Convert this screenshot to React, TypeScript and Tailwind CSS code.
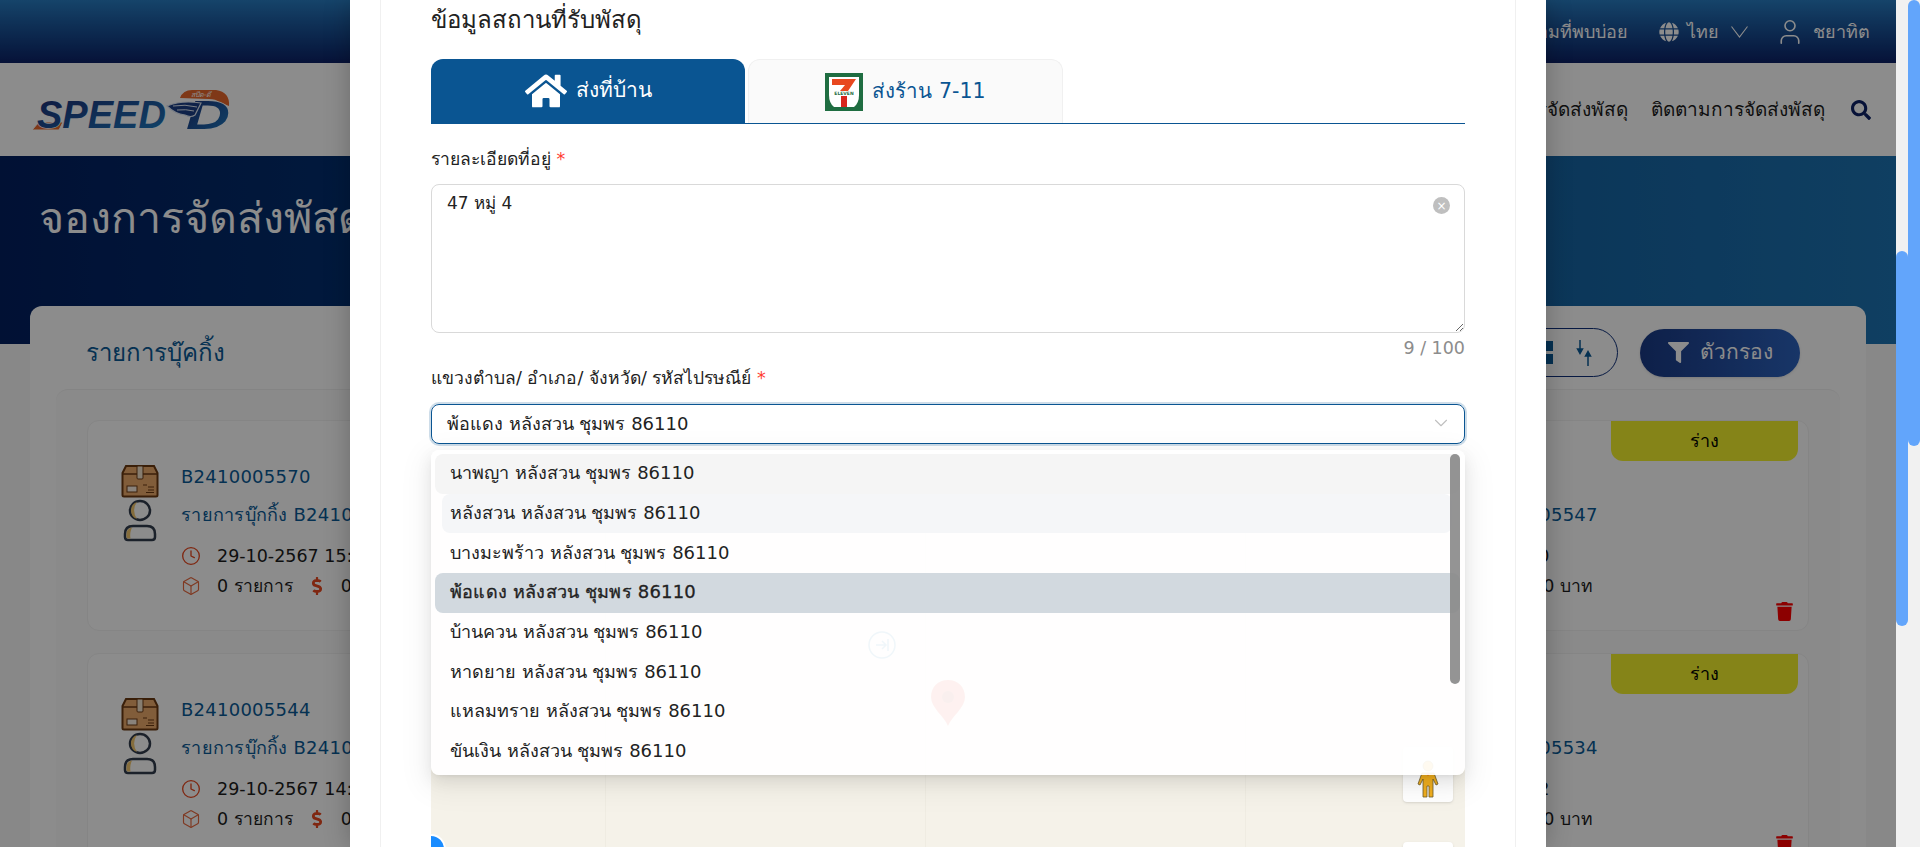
import { Box, ChevronDown, Clock, User } from "lucide-react"
import { FaDollarSign, FaFilter, FaGlobe, FaHome, FaSearch, FaTrash } from "react-icons/fa"

const font = "font-['DejaVu_Sans','Noto_Sans',sans-serif]"

const SpeedLogo = () => (
    <svg width="202" height="50" viewBox="0 -4 202 50">
        <defs>
            <linearGradient id="speedFill" x1="0" y1="0" x2="1" y2="1">
                <stop offset="0" stopColor="#1c2a72" />
                <stop offset="1" stopColor="#1f7fc4" />
            </linearGradient>
        </defs>
        <path d="M150 9 q3 -8 12 -8 h24 q14 2 13 16 l-10 -4 q-3 -3 -10 -3 z" fill="#e8662a" />
        <text x="171" y="8" fontSize="7" fill="#fff" fontStyle="italic" textAnchor="middle">สปีด-ดี</text>
        <path d="M2 41 l7 -8 h24 l-4 8 z" fill="#e8662a" stroke="#fff" strokeWidth="1" />
        <text x="7" y="39" fontSize="38" fontWeight="700" fontStyle="italic" fontFamily="'Liberation Sans', sans-serif" fill="url(#speedFill)" stroke="#fff" strokeWidth="1.5" paintOrder="stroke">SPEED</text>
        <text x="156" y="40" fontSize="40" fontWeight="700" fontStyle="italic" fontFamily="'Liberation Sans', sans-serif" textLength="44" lengthAdjust="spacingAndGlyphs" fill="url(#speedFill)" stroke="#fff" strokeWidth="1.5" paintOrder="stroke">D</text>
        <path d="M137 17 q14 -6 34 -3 l-6 12 q-4 3 -10 0 q-10 -1 -18 -9 z" fill="#1c3f85" stroke="#dfe7f3" strokeWidth="1.2" />
        <path d="M143 17 q12 -2 24 1 M147 21 q9 -1 17 1" fill="none" stroke="#dfe7f3" strokeWidth="1" />
    </svg>
)

const ParcelIcon = () => (
    <svg width="38" height="78" viewBox="0 0 38 78" className="shrink-0">
        <path d="M1.500 9 L5 2 h28 l3.500 7 v22 q0 1.500 -1.500 1.500 h-32 q-1.500 0 -1.500 -1.500 z" fill="#eca96b" stroke="#6b3a12" strokeWidth="2" />
        <path d="M1.500 10 h35" stroke="#6b3a12" strokeWidth="1.500" />
        <rect x="16" y="2" width="6" height="13" rx="1" fill="#f4e3cd" stroke="#6b3a12" strokeWidth="1" />
        <rect x="6" y="22" width="10" height="6" fill="#f9ede0" stroke="#6b3a12" strokeWidth="1" />
        <path d="M22 21 h4 M27 23 h6 M27 26 h6 M25 28.500 h8" stroke="#6b3a12" strokeWidth="1" />
        <ellipse cx="19" cy="46.500" rx="10" ry="9.500" fill="#fff" stroke="#323c4d" strokeWidth="2.500" />
        <path d="M16 38 a9 9 0 0 0 0 17 a14 14 0 0 1 0 -17" fill="#f2c66d" />
        <path d="M7 76 q-3 0 -3 -3 v-3 q0 -8 8 -8 h14 q8 0 8 8 v3 q0 3 -3 3 z" fill="#fff" stroke="#323c4d" strokeWidth="2.500" />
        <path d="M11 63.500 q-5.500 1 -5.500 6.500 v3 q0 1.500 2 1.500 h2 q-1 -6 1.500 -11" fill="#f2c66d" />
    </svg>
)

const SevenEleven = () => (
    <svg width="38" height="38" viewBox="0 0 38 38">
        <rect width="38" height="38" fill="#1f6d41" />
        <path d="M4 4 h30 v18 q0 8 -5 12 h-20 q-5 -4 -5 -12 z" fill="#fff" />
        <path d="M7 6 h24 l-8 12 h-8 l5 -6 h-13 z" fill="#e8481f" />
        <path d="M16 23 h6 v11 h-6 z" fill="#d8261c" />
        <rect x="8" y="18" width="22" height="5" fill="#fff" />
        <text x="19" y="22" fontSize="4.500" textAnchor="middle" fill="#1f6d41" fontWeight="700">ELEVEN</text>
    </svg>
)

const Pegman = () => (
    <svg width="22" height="38" viewBox="0 0 22 38">
        <circle cx="11" cy="6" r="5" fill="#f5b82e" stroke="#8a6a1a" strokeWidth="0.600" />
        <path d="M5 13 h12 l4 11 -2 1 -3 -6 v18 h-4 v-11 h-2 v11 h-4 v-18 l-3 6 -2 -1 z" fill="#f0ae1e" stroke="#6d5a2a" strokeWidth="0.800" />
        <path d="M9 13 h4 l-2 3 z" fill="#d9541e" />
    </svg>
)

type Booking = { id: string; time: string }

const BookingCard = ({ id, time }: Booking) => (
    <div className="relative flex h-[211px] gap-[22px] rounded-xl border border-[#f2f2f2] bg-white pl-[33px] pt-[43px]">
        <ParcelIcon />
        <div className="flex flex-col">
            <div className="-mt-[1px] h-[28px] text-[18px] leading-[28px] tracking-[0.25px] text-[#0a5a96]">{id}</div>
            <div className="mt-[10px] h-[28px] text-[18px] leading-[28px] tracking-[0.25px] text-[#0a5a96]">รายการบุ๊กกิ้ง {id}</div>
            <div className="mt-[13px] flex h-[28px] items-center gap-[16px] text-[17.5px] text-[#1c1c1c]">
                <Clock size={20} strokeWidth={1.6} className="text-[#e8481f]" />
                <span>{time}</span>
            </div>
            <div className="mt-[2px] flex h-[28px] items-center text-[17.5px] text-[#1c1c1c]">
                <Box size={20} strokeWidth={1.4} className="text-[#e8693f]" />
                <span className="ml-[16px]">0 รายการ</span>
                <FaDollarSign size={18} className="ml-[15px] text-[#e8481f]" />
                <span className="ml-[15px]">0.00 บาท</span>
            </div>
        </div>
        <div className="absolute right-[10px] top-0 flex h-[40px] w-[187px] items-center justify-center rounded-b-xl bg-[#f2f02c] pb-[2px] text-[18px] text-black">ร่าง</div>
        <FaTrash size={19} className="absolute bottom-[9px] right-[14px] text-[#ff0000]" />
    </div>
)

const options = [
    "นาพญา หลังสวน ชุมพร 86110",
    "หลังสวน หลังสวน ชุมพร 86110",
    "บางมะพร้าว หลังสวน ชุมพร 86110",
    "พ้อแดง หลังสวน ชุมพร 86110",
    "บ้านควน หลังสวน ชุมพร 86110",
    "หาดยาย หลังสวน ชุมพร 86110",
    "แหลมทราย หลังสวน ชุมพร 86110",
    "ขันเงิน หลังสวน ชุมพร 86110",
]

const optionClass = (i: number) => {
    if (i === 0) return "pl-[15px] bg-[#f5f5f5] rounded-lg mr-[5px]"
    if (i === 1) return "pl-[8px] bg-[#f5f6f8] rounded-lg ml-[7px] mr-[13px]"
    if (i === 3) return "pl-[15px] bg-[#d2d9df] rounded-lg mr-[5px] tracking-[0.2px] [-webkit-text-stroke:0.3px_#222]"
    return "pl-[15px]"
}

const Page = () => (
    <div className="h-[847px] w-[1896px] bg-[#f7f7f7]">
        <div className="flex h-[63px] items-center justify-end bg-gradient-to-b from-[#287cc1] to-[#0d2166] pr-[26px] text-[18px] text-white">
            <span>คำถามที่พบบ่อย</span>
            <FaGlobe size={20} className="ml-[31px]" />
            <span className="ml-[8px]">ไทย</span>
            <svg width="17" height="12" viewBox="0 0 17 12" fill="none" stroke="currentColor" strokeWidth="1.1" className="ml-[12px]">
                <path d="M0.500 0.500 L8.500 11 L16.500 0.500" />
            </svg>
            <User size={30} strokeWidth={1.3} className="ml-[27px]" />
            <span className="ml-[8px]">ชยาทิต</span>
        </div>
        <div className="flex h-[93px] items-center justify-between bg-white pl-[30px] pr-[25px]">
            <SpeedLogo />
            <div className="flex items-center text-[19px] text-[#1c1c1c]">
                <span>การจัดส่งพัสดุ</span>
                <span className="ml-[23px]">ติดตามการจัดส่งพัสดุ</span>
                <FaSearch size={20} className="ml-[26px] text-[#0d2166]" />
            </div>
        </div>
        <div className="h-[188px] bg-gradient-to-r from-[#021f60] to-[#1d73b2] pl-[39px] pt-[32px] text-[43px] leading-[60px] text-white">จองการจัดส่งพัสดุ</div>
        <div className="mx-[30px] -mt-[38px] rounded-t-xl bg-white">
            <div className="flex h-[83px] items-center justify-between pl-[56px] pr-[66px] pt-[10px]">
                <div className="text-[24px] text-[#0a5a96]">รายการบุ๊คกิ้ง</div>
                <div className="flex items-center gap-[22px]">
                    <div className="flex h-[49px] w-[150px] items-center justify-end gap-[22px] rounded-full border border-[#0d2f7a] pr-[24px] text-[#0a5a96]">
                        <div className="grid w-[22px] grid-cols-2 gap-[3px]">
                            <span className="h-[10px] bg-[#0a5a96]" />
                            <span className="h-[10px] bg-[#0a5a96]" />
                            <span className="h-[10px] bg-[#0a5a96]" />
                            <span className="h-[10px] bg-[#0a5a96]" />
                        </div>
                        <svg width="18" height="28" viewBox="0 0 18 28" fill="none" stroke="currentColor" strokeWidth="1.5">
                            <path d="M5 1 v13 M2.500 10 l2.500 4.500 2.500 -4.500 z" fill="currentColor" />
                            <path d="M13 27 v-13 M10.500 17 l2.500 -4.500 2.500 4.500 z" fill="currentColor" />
                        </svg>
                    </div>
                    <div className="flex h-[48px] w-[160px] items-center justify-center gap-[11px] rounded-full bg-gradient-to-r from-[#1a3a85] to-[#2c62bd] text-[21px] text-white shadow">
                        <FaFilter size={21} />
                        <span>ตัวกรอง</span>
                    </div>
                </div>
            </div>
            <div className="mx-[26px] rounded-t-xl border-t border-[#f0f0f0] bg-[#fbfbfb] px-[31px] pt-[30px]">
                <div className="grid grid-cols-3 gap-x-[40px] gap-y-[22px]">
                    <BookingCard id="B2410005570" time="29-10-2567 15:32" />
                    <BookingCard id="B2410005560" time="29-10-2567 15:20" />
                    <BookingCard id="B2410005547" time="29-10-2567 15:00" />
                    <BookingCard id="B2410005544" time="29-10-2567 14:58" />
                    <BookingCard id="B2410005540" time="29-10-2567 14:50" />
                    <BookingCard id="B2410005534" time="29-10-2567 14:42" />
                </div>
            </div>
        </div>
    </div>
)

const Modal = () => (
    <div className="absolute bottom-0 left-[350px] top-0 w-[1196px] bg-white px-[30px] shadow-[0_0_24px_rgba(0,0,0,0.25)]">
        <div className="h-full border-x border-[#f0f0f0] px-[50px] pt-[5px]">
            <div className="h-[30px] text-[24px] leading-[30px] text-[#222]">ข้อมูลสถานที่รับพัสดุ</div>
            <div className="mt-[24px] flex h-[65px] gap-[3px] border-b border-[#0a5592]">
                <div className="flex w-[314px] items-center justify-center gap-[9px] rounded-t-xl bg-[#0a5592] text-[21px] text-white">
                    <FaHome size={42} />
                    <span>ส่งที่บ้าน</span>
                </div>
                <div className="flex w-[315px] items-center justify-center gap-[9px] rounded-t-xl border border-b-0 border-[#f0f0f0] bg-[#fafafa] text-[20.5px] text-[#0a5592]">
                    <SevenEleven />
                    <span>ส่งร้าน 7-11</span>
                </div>
            </div>
            <div className="mt-[23px] h-[24px] text-[17.5px] leading-[24px] text-[#222]">รายละเอียดที่อยู่ <span className="text-[#ff3b30]">*</span></div>
            <div className="relative mt-[13px] h-[149px]">
                <textarea
                    readOnly
                    defaultValue="47 หมู่ 4"
                    className="block h-[149px] w-full resize-y rounded-lg border border-[#d9d9d9] px-[15px] py-[6px] text-[17px] leading-[24px] text-[#222] outline-none"
                />
                <span className="absolute right-[15px] top-[13px] flex h-[17px] w-[17px] items-center justify-center rounded-full bg-[#bfbfbf] text-[12px] leading-none text-white">×</span>
            </div>
            <div className="mt-[3px] h-[24px] text-right text-[17.5px] leading-[24px] text-[#8c8c8c]">9 / 100</div>
            <div className="mt-[6px] h-[24px] text-[17.5px] leading-[24px] text-[#222]">แขวงตำบล/ อำเภอ/ จังหวัด/ รหัสไปรษณีย์ <span className="text-[#ff3b30]">*</span></div>
            <div className="relative mt-[14px]">
                <div className="flex h-[40px] items-center justify-between rounded-lg border border-[#0a5592] pb-[2px] pl-[15px] pr-[12px] text-[18px] text-[#222] shadow-[0_0_0_2px_rgba(10,85,146,0.2)]">
                    <span>พ้อแดง หลังสวน ชุมพร 86110</span>
                    <ChevronDown size={22} strokeWidth={1.2} className="text-[#bfbfbf]" />
                </div>
                <div className="absolute left-0 right-0 top-[46px] z-10 h-[325px] rounded-lg bg-white/93 pl-[4px] pt-[4px] shadow-[0_6px_16px_0_rgba(0,0,0,0.08),0_3px_6px_-4px_rgba(0,0,0,0.12),0_9px_28px_8px_rgba(0,0,0,0.05)]">
                    {options.map((o, i) => (
                        <div key={o} className={`flex h-[39.7px] items-center pb-[2px] text-[18px] text-[#222] ${optionClass(i)}`}>{o}</div>
                    ))}
                    <div className="absolute right-[5px] top-[4px] h-[230px] w-[10px] rounded-full bg-[#888]/90" />
                </div>
            </div>
            <div className="relative mt-[36px] h-[367px] overflow-hidden bg-[#f5f2e9]">
                <span className="absolute bottom-0 left-[174px] top-0 w-px bg-[#efece2]" />
                <span className="absolute bottom-0 left-[494px] top-0 w-px bg-[#efece2]" />
                <span className="absolute bottom-0 left-[814px] top-0 w-px bg-[#efece2]" />
                <svg width="28" height="28" viewBox="0 0 28 28" fill="none" stroke="#2a7fb0" strokeWidth="1.500" className="absolute left-[437px] top-[151px]">
                    <circle cx="14" cy="14" r="13" />
                    <path d="M8 14 h10 M14 10 l4 4 -4 4 M20 8 v12" />
                </svg>
                <svg width="34" height="46" viewBox="0 0 34 46" className="absolute left-[500px] top-[200px]">
                    <path d="M17 0 C7 0 0 7 0 17 C0 28 13 36 17 46 C21 36 34 28 34 17 C34 7 27 0 17 0 z" fill="#ea4335" />
                    <circle cx="17" cy="17" r="6" fill="#a52714" />
                </svg>
                <div className="absolute left-[972px] top-[267px] flex h-[55px] w-[50px] items-end justify-center rounded-sm bg-white pb-[4px] shadow">
                    <Pegman />
                </div>
                <div className="absolute left-[972px] top-[362px] h-[40px] w-[50px] rounded-sm bg-white shadow" />
                <div className="absolute -left-[15px] top-[354px] h-[30px] w-[30px] rounded-full border-2 border-white bg-[#1a8cff]" />
            </div>
        </div>
    </div>
)

export default function App() {
    return (
        <div className={`relative h-[847px] w-[1920px] overflow-hidden bg-[#f1f1f1] ${font}`}>
            <Page />
            <div className="absolute bottom-0 left-0 top-0 w-[1896px] bg-black/45" />
            <div className="absolute left-[1896px] top-[251px] h-[375px] w-[12px] rounded-full bg-[#62a5fb]" />
            <div className="absolute left-[1908px] top-0 h-[446px] w-[12px] rounded-full bg-[#62a5fb]" />
            <Modal />
        </div>
    )
}
